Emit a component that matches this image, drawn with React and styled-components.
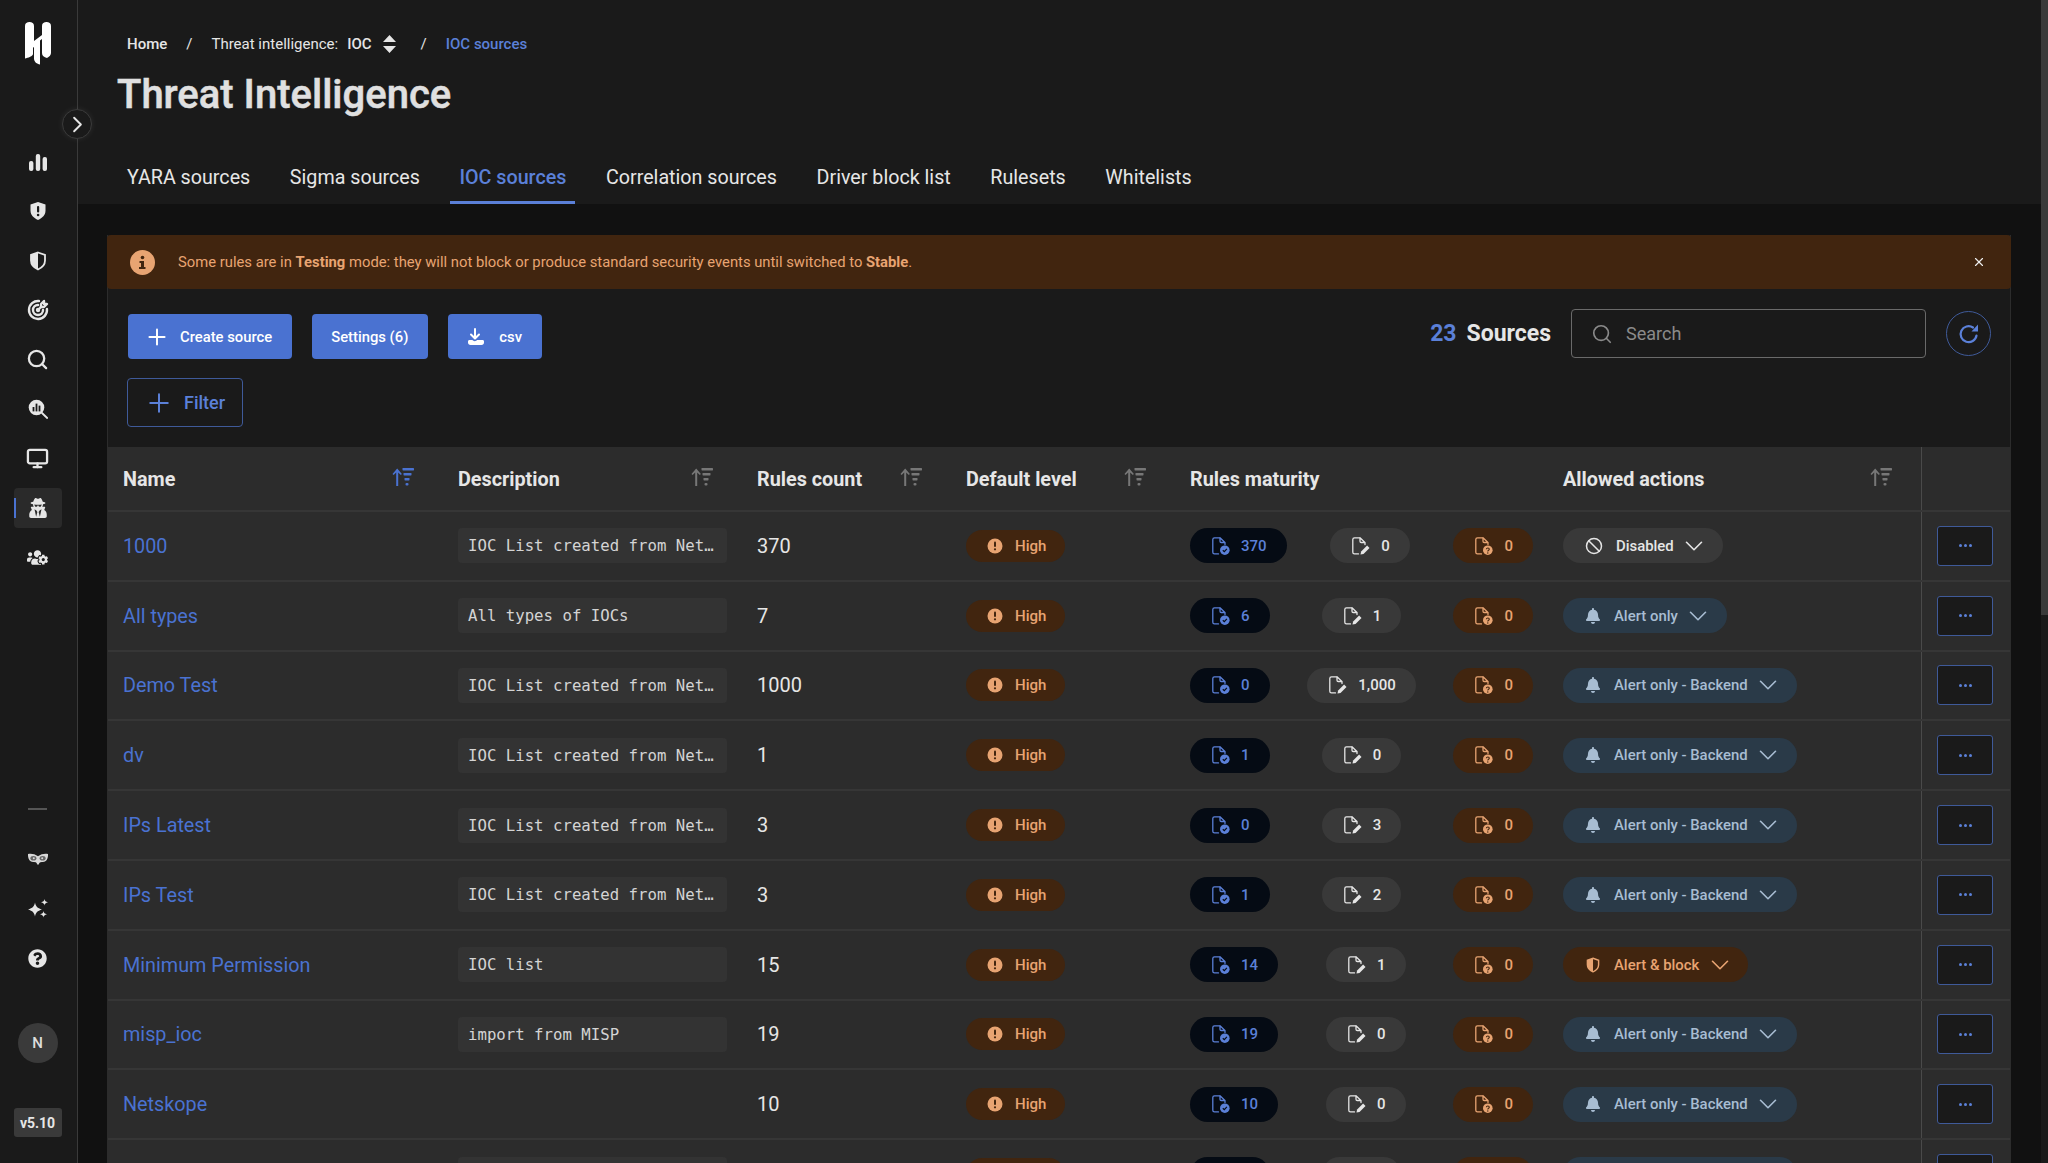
import styled, { createGlobalStyle } from "styled-components";
import { Search, Monitor, Plus, Ban, ChevronDown, ChevronRight, X } from "lucide-react";
import { FaUserSecret, FaUsersCog, FaQuestionCircle, FaBell } from "react-icons/fa";
import { TbTargetArrow } from "react-icons/tb";

const COLUMNS = "335px 299px 209px 224px 373px 373px 90px";
const BLUE = "#5b80d8";
const ORANGE = "#e8a472";

const rows = [
  { name: "1000", desc: "IOC List created from Netskope", count: "370", stable: "370", test: "0", ver: "0", action: "disabled" },
  { name: "All types", desc: "All types of IOCs", count: "7", stable: "6", test: "1", ver: "0", action: "only" },
  { name: "Demo Test", desc: "IOC List created from Netskope", count: "1000", stable: "0", test: "1,000", ver: "0", action: "backend" },
  { name: "dv", desc: "IOC List created from Netskope", count: "1", stable: "1", test: "0", ver: "0", action: "backend" },
  { name: "IPs Latest", desc: "IOC List created from Netskope", count: "3", stable: "0", test: "3", ver: "0", action: "backend" },
  { name: "IPs Test", desc: "IOC List created from Netskope", count: "3", stable: "1", test: "2", ver: "0", action: "backend" },
  { name: "Minimum Permission", desc: "IOC list", count: "15", stable: "14", test: "1", ver: "0", action: "block" },
  { name: "misp_ioc", desc: "import from MISP", count: "19", stable: "19", test: "0", ver: "0", action: "backend" },
  { name: "Netskope", desc: "", count: "10", stable: "10", test: "0", ver: "0", action: "backend" },
  { name: "OTX", desc: "IOC List created from Netskope", count: "8", stable: "8", test: "0", ver: "0", action: "backend" },
];

const GlobalStyle = createGlobalStyle`
  html, body {
    margin: 0;
    height: 100%;
    overflow: hidden;
    background: #111111;
    font-family: Roboto, "Liberation Sans", sans-serif;
    color: #e6e6e6;
  }
  * { box-sizing: border-box; }
`;

const BarsIcon = () => (
  <svg width="20" height="20" viewBox="0 0 20 20" fill="#e6e6e6">
    <rect x="1" y="9" width="4.4" height="10" rx="2" />
    <rect x="7.8" y="2" width="4.4" height="17" rx="2" />
    <rect x="14.6" y="5" width="4.4" height="14" rx="2" />
  </svg>
);
const ShieldAlert = () => (
  <svg width="20" height="20" viewBox="0 0 20 20">
    <path d="M10 1l7.5 2.6v6c0 4.600-3.200 7.600-7.500 9.400-4.300-1.800-7.500-4.800-7.500-9.400v-6z" fill="#e6e6e6" />
    <rect x="9" y="5" width="2.2" height="6.5" rx="1" fill="#1a1a1a" />
    <circle cx="10.1" cy="14" r="1.3" fill="#1a1a1a" />
  </svg>
);
const ShieldHalf = ({ color = "#e6e6e6", size = 20 }) => (
  <svg width={size} height={size} viewBox="0 0 20 20" fill="none">
    <path d="M10 1.500l7 2.500v5.600c0 4.400-3 7.200-7 8.900-4-1.700-7-4.500-7-8.900V4z" stroke={color} strokeWidth="1.8" />
    <path d="M10 1.500L3 4v5.600c0 4.400 3 7.200 7 8.900z" fill={color} />
  </svg>
);
const SearchBars = () => (
  <svg width="20" height="20" viewBox="0 0 20 20">
    <circle cx="8.5" cy="8.5" r="7.8" fill="#e6e6e6" />
    <path d="M14 14l5.200 5" stroke="#e6e6e6" strokeWidth="1.8" strokeLinecap="round" />
    <rect x="4.6" y="8" width="1.8" height="4.4" fill="#1a1a1a" />
    <rect x="7.6" y="4.6" width="1.8" height="7.8" fill="#1a1a1a" />
    <rect x="10.6" y="6.6" width="1.8" height="5.8" fill="#1a1a1a" />
  </svg>
);
const Owl = () => (
  <svg width="20" height="12" viewBox="0 0 20 12">
    <path
      d="M0 1C3 .3 7 1 10 3.200 13 1 17 .3 20 1c.3 4.600-1.500 7.500-5 8-2 .3-3.500-.3-4.200 2.500h-1.600C8.500 8.700 7 9.300 5 9 1.500 8.500-.3 5.600 0 1z"
      fill="#d8d8d8"
    />
    <ellipse cx="5.400" cy="5.200" rx="3" ry="2.300" fill="#666" />
    <ellipse cx="14.600" cy="5.200" rx="3" ry="2.300" fill="#666" />
    <circle cx="5.800" cy="5.200" r="1" fill="#d8d8d8" />
    <circle cx="14.200" cy="5.200" r="1" fill="#d8d8d8" />
  </svg>
);
const Sparkles = () => (
  <svg width="20" height="20" viewBox="0 0 20 20" fill="#e6e6e6">
    <path d="M7 3.500c.8 4 2.300 5.500 7 7-4.700 1.500-6.200 3-7 7-.8-4-2.300-5.500-7-7 4.700-1.500 6.200-3 7-7z" />
    <path d="M16.500 0c.3 2 1.100 2.700 3.500 3.300-2.400.6-3.200 1.300-3.500 3.300-.3-2-1.100-2.700-3.500-3.300 2.400-.6 3.200-1.300 3.500-3.300z" />
    <path d="M15.500 12c.3 2 1.100 2.700 3.500 3.300-2.400.6-3.200 1.300-3.500 3.300-.3-2-1.100-2.700-3.500-3.300 2.400-.6 3.200-1.300 3.500-3.300z" />
  </svg>
);
const Logo = () => (
  <svg width="26" height="43" viewBox="0 0 26 43" fill="#ffffff">
    <path d="M0 4c0-3 2-4 4.500-4S9 1 9 4v15l8-6V4c0-3 2-4 4.500-4S26 1 26 4v27c0 2-2 4-4 5-3-1-5-2-5-5V17l-2 1.500V42.500c-3-.5-6-2.500-6-6V25l-1 .8V32c0 2-5 4-8 4.500z" />
  </svg>
);
const Carets = () => (
  <svg width="13" height="18" viewBox="0 0 13 18" fill="#e6e6e6">
    <path d="M6.500 0L13 7H0zM6.500 18L0 11h13z" />
  </svg>
);
const InfoBadge = () => (
  <svg width="25" height="25" viewBox="0 0 25 25">
    <circle cx="12.500" cy="12.500" r="12.500" fill={ORANGE} />
    <circle cx="12.500" cy="7.500" r="1.800" fill="#41250f" />
    <path d="M9.500 11h4.500v6h1.500v2h-6.500v-2h2v-4h-1.500z" fill="#41250f" />
  </svg>
);
const HighIcon = () => (
  <svg width="16" height="16" viewBox="0 0 16 16">
    <circle cx="8" cy="8" r="7.500" fill={ORANGE} />
    <rect x="7" y="3.500" width="2" height="5.500" rx="1" fill="#41250f" />
    <circle cx="8" cy="11.300" r="1.100" fill="#41250f" />
  </svg>
);
const DownloadIcon = () => (
  <svg width="18" height="18" viewBox="0 0 18 18" fill="none">
    <path d="M8 1v8" stroke="#fff" strokeWidth="2" strokeLinecap="round" />
    <path d="M4 6.500L8 10.500l4-4" stroke="#fff" strokeWidth="2" strokeLinecap="round" strokeLinejoin="round" />
    <path d="M1 13.500c0-1 .7-1.500 1.500-1.500h3c.7 1.500 3.800 1.500 4.500 0h5.500c1 0 1.500 .7 1.500 1.500v1c0 1.500-1 2.500-2.500 2.500h-11C2 17 1 16 1 14.500z" fill="#fff" />
  </svg>
);
const RefreshIcon = () => (
  <svg width="22" height="22" viewBox="0 0 22 22" fill="none">
    <path d="M18.500 12.500A8 8 0 1 1 15 4.500" stroke={BLUE} strokeWidth="2.200" strokeLinecap="round" />
    <path d="M13.500 8.500H20V1.500z" fill={BLUE} />
  </svg>
);
const SortIcon = ({ color }) => (
  <svg width="22" height="18" viewBox="0 0 22 18" fill={color}>
    <path d="M4.200 18V4.500L1.600 7 .5 6 5.200 .5 9.900 6 8.800 7 6.200 4.500V18z" />
    <rect x="10.500" y="0" width="11.500" height="2.400" rx=".6" />
    <rect x="11.500" y="5" width="8" height="2.400" rx=".6" />
    <rect x="12.500" y="10" width="5" height="2.400" rx=".6" />
    <rect x="13.500" y="15" width="3" height="2.400" rx="1" />
  </svg>
);
const DocIcon = ({ color, kind }) => (
  <svg width="18" height="18" viewBox="0 0 18 18" fill="none">
    <path
      d="M8 .8H2.500C1.500 .8 .8 1.500 .8 2.500v12.700c0 1 .7 1.700 1.700 1.700h4M8 .8l5 4.700v2M8 .8v3.400c0 .8 .5 1.300 1.300 1.300H13"
      stroke={color}
      strokeWidth="1.300"
      strokeLinecap="round"
    />
    {kind === "check" && (
      <>
        <circle cx="12.800" cy="13.200" r="4.800" fill={color} />
        <path d="M10.800 13.300l1.500 1.400 2.600-2.800" stroke="#050b14" strokeWidth="1.200" />
      </>
    )}
    {kind === "edit" && <path d="M8.500 17.500l.6-3 6-6 2.400 2.400-6 6z" fill={color} />}
    {kind === "question" && (
      <>
        <circle cx="12.800" cy="13.200" r="4.800" fill={color} />
        <path d="M11.300 12.200c.2-1.600 3-1.600 3 0 0 1.200-1.500 1-1.500 2.200" stroke="#41250f" strokeWidth="1.100" />
        <circle cx="12.800" cy="16" r=".7" fill="#41250f" />
      </>
    )}
  </svg>
);

const ACTIONS = {
  disabled: { label: "Disabled", bg: "#393939", fg: "#e6e6e6", icon: <Ban size={18} strokeWidth={2} /> },
  only: { label: "Alert only", bg: "#2a3a48", fg: "#a8bdd2", icon: <FaBell size={16} /> },
  backend: { label: "Alert only - Backend", bg: "#2a3a48", fg: "#a8bdd2", icon: <FaBell size={16} /> },
  block: { label: "Alert & block", bg: "#41250f", fg: ORANGE, icon: <ShieldHalf color={ORANGE} size={16} /> },
};

export default function App() {
  const topItems = [
    <BarsIcon />,
    <ShieldAlert />,
    <ShieldHalf />,
    <TbTargetArrow size={24} strokeWidth={2.4} />,
    <Search size={23} strokeWidth={2.4} />,
    <SearchBars />,
    <Monitor size={23} strokeWidth={2.4} />,
    <FaUserSecret size={20} />,
    <FaUsersCog size={21} />,
  ];

  return (
    <Shell>
      <GlobalStyle />
      <Sidebar>
        <LogoWrap>
          <Logo />
        </LogoWrap>
        <Toggle>
          <ChevronRight size={27} strokeWidth={1.7} />
        </Toggle>
        <NavList>
          {topItems.map((icon, i) => (
            <NavItem key={i} $active={i === 7}>
              {icon}
            </NavItem>
          ))}
        </NavList>
        <NavBottom>
          <NavDash />
          <NavItem>
            <Owl />
          </NavItem>
          <NavItem>
            <Sparkles />
          </NavItem>
          <NavItem>
            <FaQuestionCircle size={19} />
          </NavItem>
          <Avatar>N</Avatar>
          <Version>v5.10</Version>
        </NavBottom>
      </Sidebar>

      <Main>
        <Header>
          <Crumbs>
            <CrumbStrong>Home</CrumbStrong>
            <Slash>/</Slash>
            <span>Threat intelligence:</span>
            <CrumbPick>IOC</CrumbPick>
            <CaretWrap>
              <Carets />
            </CaretWrap>
            <Slash>/</Slash>
            <CrumbCurrent>IOC sources</CrumbCurrent>
          </Crumbs>
          <Title>Threat Intelligence</Title>
          <Tabs>
            {["YARA sources", "Sigma sources", "IOC sources", "Correlation sources", "Driver block list", "Rulesets", "Whitelists"].map(
              (t) => (
                <Tab key={t} $active={t === "IOC sources"}>
                  {t}
                </Tab>
              )
            )}
          </Tabs>
        </Header>

        <Content>
          <Card>
            <Banner>
              <InfoBadge />
              <BannerText>
                Some rules are in <b>Testing</b> mode: they will not block or produce standard security events until
                switched to <b>Stable</b>.
              </BannerText>
              <BannerClose>
                <X size={14} strokeWidth={2} />
              </BannerClose>
            </Banner>

            <Toolbar>
              <ToolLeft>
                <ButtonRow>
                  <SolidButton>
                    <Plus size={26} strokeWidth={1.8} />
                    Create source
                  </SolidButton>
                  <SolidButton>Settings (6)</SolidButton>
                  <SolidButton>
                    <DownloadIcon />
                    csv
                  </SolidButton>
                </ButtonRow>
                <FilterButton>
                  <Plus size={30} strokeWidth={1.6} />
                  Filter
                </FilterButton>
              </ToolLeft>
              <ToolRight>
                <Counter>
                  <em>23</em>Sources
                </Counter>
                <SearchBox>
                  <Search size={22} strokeWidth={1.8} />
                  <span>Search</span>
                </SearchBox>
                <Refresh>
                  <RefreshIcon />
                </Refresh>
              </ToolRight>
            </Toolbar>

            <Table>
              <HeadRow>
                <HeadCell>
                  Name
                  <SortIcon color="#4a72d1" />
                </HeadCell>
                <HeadCell>
                  Description
                  <SortIcon color="#777777" />
                </HeadCell>
                <HeadCell>
                  Rules count
                  <SortIcon color="#777777" />
                </HeadCell>
                <HeadCell>
                  Default level
                  <SortIcon color="#777777" />
                </HeadCell>
                <HeadCell>Rules maturity</HeadCell>
                <HeadCell>
                  Allowed actions
                  <SortIcon color="#777777" />
                </HeadCell>
                <ActionCell />
              </HeadRow>

              {rows.map((r) => {
                const action = ACTIONS[r.action];
                return (
                  <Row key={r.name}>
                    <Cell>
                      <NameLink>{r.name}</NameLink>
                    </Cell>
                    <Cell>{r.desc && <DescBox>{r.desc}</DescBox>}</Cell>
                    <Cell>{r.count}</Cell>
                    <Cell>
                      <LevelPill>
                        <HighIcon />
                        High
                      </LevelPill>
                    </Cell>
                    <Cell>
                      <Maturity>
                        <CountPill $bg="#050b14" $fg={BLUE}>
                          <DocIcon color={BLUE} kind="check" />
                          {r.stable}
                        </CountPill>
                        <CountPill $bg="#393939" $fg="#e6e6e6">
                          <DocIcon color="#e6e6e6" kind="edit" />
                          {r.test}
                        </CountPill>
                        <CountPill $bg="#41250f" $fg={ORANGE}>
                          <DocIcon color={ORANGE} kind="question" />
                          {r.ver}
                        </CountPill>
                      </Maturity>
                    </Cell>
                    <Cell>
                      <ActionPill $bg={action.bg} $fg={action.fg}>
                        {action.icon}
                        <span>{action.label}</span>
                        <ChevronDown size={30} strokeWidth={1.3} />
                      </ActionPill>
                    </Cell>
                    <ActionCell>
                      <DotsButton>
                        <i />
                        <i />
                        <i />
                      </DotsButton>
                    </ActionCell>
                  </Row>
                );
              })}
            </Table>
          </Card>
        </Content>
      </Main>
      <Scrollbar>
        <ScrollThumb />
      </Scrollbar>
    </Shell>
  );
}

const Shell = styled.div`
  display: flex;
  height: 100vh;
  overflow: hidden;
`;

const Sidebar = styled.aside`
  position: relative;
  flex: 0 0 78px;
  display: flex;
  flex-direction: column;
  background: #1a1a1a;
  border-right: 1px solid #3a3a3a;
`;

const LogoWrap = styled.div`
  display: flex;
  justify-content: center;
  padding: 22px 2px 0 0;
  height: 138px;
`;

const Toggle = styled.button`
  position: absolute;
  top: 109px;
  left: 62px;
  width: 30px;
  height: 30px;
  padding: 0;
  display: flex;
  align-items: center;
  justify-content: center;
  background: #1a1a1a;
  border: 1px solid #3a3a3a;
  border-radius: 50%;
  color: #e6e6e6;
  box-shadow: 0 0 6px rgba(255, 255, 255, 0.08);
`;

const NavList = styled.nav`
  display: flex;
  flex-direction: column;
  align-items: center;
  gap: 9.4px;
  padding: 4px 2px 0 0;
`;

const NavBottom = styled.div`
  display: flex;
  flex-direction: column;
  align-items: center;
  gap: 9.5px;
  margin-top: auto;
  padding: 0 2px 26px 0;
`;

const NavItem = styled.div`
  position: relative;
  width: 48px;
  height: 40px;
  display: flex;
  align-items: center;
  justify-content: center;
  color: #e6e6e6;
  border-radius: 4px;
  background: ${(p) => (p.$active ? "#2a2a2a" : "transparent")};

  &::before {
    content: "";
    display: ${(p) => (p.$active ? "block" : "none")};
    position: absolute;
    left: 0;
    top: 10px;
    width: 2px;
    height: 20px;
    background: #4a72d1;
  }
`;

const NavDash = styled.div`
  width: 19px;
  height: 2px;
  margin-bottom: 20px;
  background: #555555;
`;

const Avatar = styled.div`
  width: 40px;
  height: 40px;
  margin-top: 35px;
  display: flex;
  align-items: center;
  justify-content: center;
  border-radius: 50%;
  background: #3a3a3a;
  color: #dddddd;
  font-size: 15px;
  font-weight: 500;
`;

const Version = styled.div`
  width: 48px;
  height: 29px;
  margin-top: 36px;
  display: flex;
  align-items: center;
  justify-content: center;
  border-radius: 3px;
  background: #3a3a3a;
  color: #e6e6e6;
  font-size: 14px;
  font-weight: 700;
`;

const Main = styled.main`
  flex: 1;
  min-width: 0;
  display: flex;
  flex-direction: column;
`;

const Header = styled.header`
  height: 204px;
  flex: none;
  padding: 33px 0 0 39px;
  background: #1a1a1a;
`;

const Crumbs = styled.div`
  display: flex;
  align-items: center;
  height: 22px;
  padding-left: 10px;
  font-size: 15px;
  color: #e6e6e6;
`;

const CrumbStrong = styled.span`
  font-weight: 500;
`;

const CrumbPick = styled.span`
  font-weight: 500;
  margin: 0 11px 0 9px;
`;

const CaretWrap = styled.span`
  display: flex;
  margin-right: 6px;
`;

const CrumbCurrent = styled.span`
  font-weight: 500;
  color: ${BLUE};
`;

const Slash = styled.span`
  margin: 0 19px;
`;

const Title = styled.h1`
  margin: 16px 0 0;
  font-size: 40px;
  line-height: 48px;
  font-weight: 500;
  color: #e0e0e0;
  -webkit-text-stroke: 0.5px #e0e0e0;
`;

const Tabs = styled.div`
  display: flex;
  gap: 21.6px;
  margin: 30px 0 0 1px;
  height: 55px;
`;

const Tab = styled.div`
  padding: 4px 9px 0;
  display: flex;
  align-items: center;
  font-size: 19.7px;
  color: ${(p) => (p.$active ? BLUE : "#e6e6e6")};
  font-weight: ${(p) => (p.$active ? 500 : 400)};
  border-bottom: 3px solid ${(p) => (p.$active ? BLUE : "transparent")};
`;

const Content = styled.div`
  flex: 1;
  min-height: 0;
  padding: 31px 30px 0 29px;
  background: #111111;
`;

const Card = styled.section`
  background: #1a1a1a;
  border-left: 1px solid #2c2c2c;
  border-right: 1px solid #2c2c2c;
`;

const Banner = styled.div`
  height: 54px;
  margin-left: -1px;
  margin-right: -1px;
  padding: 0 25px 0 23px;
  display: flex;
  align-items: center;
  gap: 23px;
  background: #41250f;
  border-radius: 4px;
  color: ${ORANGE};
`;

const BannerText = styled.div`
  flex: 1;
  font-size: 14.8px;

  b {
    font-weight: 700;
  }
`;

const BannerClose = styled.div`
  display: flex;
  color: #eeeeee;
`;

const Toolbar = styled.div`
  height: 158px;
  padding: 20px 19px 0 20px;
  display: flex;
  justify-content: space-between;
  align-items: flex-start;
`;

const ToolLeft = styled.div`
  display: flex;
  flex-direction: column;
  align-items: flex-start;
  gap: 19px;
  padding-top: 5px;
`;

const ButtonRow = styled.div`
  display: flex;
  gap: 20px;
`;

const SolidButton = styled.button`
  height: 45px;
  padding: 0 19.5px;
  display: flex;
  align-items: center;
  gap: 14px;
  border: none;
  border-radius: 4px;
  background: #4a72d1;
  color: #ffffff;
  font: 500 14.8px Roboto, sans-serif;

  svg.lucide {
    margin: 0 -4px 0 -3.5px;
  }
`;

const FilterButton = styled.button`
  height: 49px;
  padding: 0 17px 0 20px;
  display: flex;
  align-items: center;
  gap: 14px;
  margin-left: -1px;
  background: transparent;
  border: 1px solid #3f5a99;
  border-radius: 4px;
  color: ${BLUE};
  font: 500 18px Roboto, sans-serif;

  svg {
    margin: 0 -4px;
  }
`;

const ToolRight = styled.div`
  display: flex;
  align-items: center;
  gap: 20px;
`;

const Counter = styled.div`
  font-size: 23px;
  font-weight: 700;
  color: #e6e6e6;

  em {
    font-style: normal;
    color: ${BLUE};
    margin-right: 10px;
  }
`;

const SearchBox = styled.div`
  width: 355px;
  height: 49px;
  padding: 0 19px;
  display: flex;
  align-items: center;
  gap: 13px;
  border: 1px solid #6a6a6a;
  border-radius: 4px;
  color: #8a8a8a;
  font-size: 18px;
`;

const Refresh = styled.div`
  width: 45px;
  height: 45px;
  display: flex;
  align-items: center;
  justify-content: center;
  border: 1px solid #3f5a99;
  border-radius: 50%;
`;

const Table = styled.div`
  background: #2c2c2c;
`;

const HeadRow = styled.div`
  display: grid;
  grid-template-columns: ${COLUMNS};
  height: 65px;
  border-bottom: 2px solid #363636;
`;

const HeadCell = styled.div`
  padding: 2px 29px 0 15px;
  display: flex;
  align-items: center;
  justify-content: space-between;
  font-size: 19.8px;
  font-weight: 700;
  color: #e6e6e6;

  svg {
    margin-top: -5px;
  }
`;

const Row = styled.div`
  display: grid;
  grid-template-columns: ${COLUMNS};
  height: 69.8px;
  border-bottom: 2px solid #363636;
`;

const Cell = styled.div`
  padding: 0 15px;
  display: flex;
  align-items: center;
  min-width: 0;
  font-size: 20px;
  color: #e6e6e6;
`;

const ActionCell = styled.div`
  display: flex;
  align-items: center;
  justify-content: center;
  padding-right: 3px;
  border-left: 1px solid #4a4a4a;
`;

const NameLink = styled.a`
  padding-top: 1px;
  color: #4a72d1;
  font-size: 19.8px;
`;

const DescBox = styled.div`
  width: 269px;
  height: 35px;
  padding: 0 10px;
  border-radius: 4px;
  background: #333333;
  color: #d4d4d4;
  font: 15.7px/35px "DejaVu Sans Mono", monospace;
  white-space: nowrap;
  overflow: hidden;
  text-overflow: ellipsis;
`;

const LevelPill = styled.div`
  height: 32px;
  padding: 0 19px 0 21px;
  display: inline-flex;
  align-items: center;
  gap: 12px;
  border-radius: 16px;
  background: #41250f;
  color: ${ORANGE};
  font-size: 15px;
  font-weight: 500;
`;

const Maturity = styled.div`
  width: 100%;
  display: flex;
  align-items: center;
  justify-content: space-between;
`;

const CountPill = styled.div`
  height: 35px;
  padding: 0 20px 0 22px;
  display: inline-flex;
  align-items: center;
  gap: 11px;
  border-radius: 18px;
  background: ${(p) => p.$bg};
  color: ${(p) => p.$fg};
  font-size: 15px;
  font-weight: 500;
`;

const ActionPill = styled.div`
  height: 35px;
  padding: 0 13.5px 0 22px;
  display: inline-flex;
  align-items: center;
  gap: 13px;
  border-radius: 18px;
  background: ${(p) => p.$bg};
  color: ${(p) => p.$fg};
  font-size: 14.9px;
  font-weight: 500;
  white-space: nowrap;

  svg:last-child {
    margin-left: -7.5px;
  }
`;

const DotsButton = styled.button`
  width: 56px;
  height: 40px;
  padding: 0;
  display: flex;
  align-items: center;
  justify-content: center;
  gap: 2px;
  background: #1a1a1a;
  border: 1px solid #3f5a99;
  border-radius: 3px;

  i {
    width: 3px;
    height: 3px;
    border-radius: 50%;
    background: ${BLUE};
  }
`;

const Scrollbar = styled.div`
  flex: 0 0 7px;
  background: #1a1a1a;
`;

const ScrollThumb = styled.div`
  height: 615px;
  background: #3a3a3a;
`;
